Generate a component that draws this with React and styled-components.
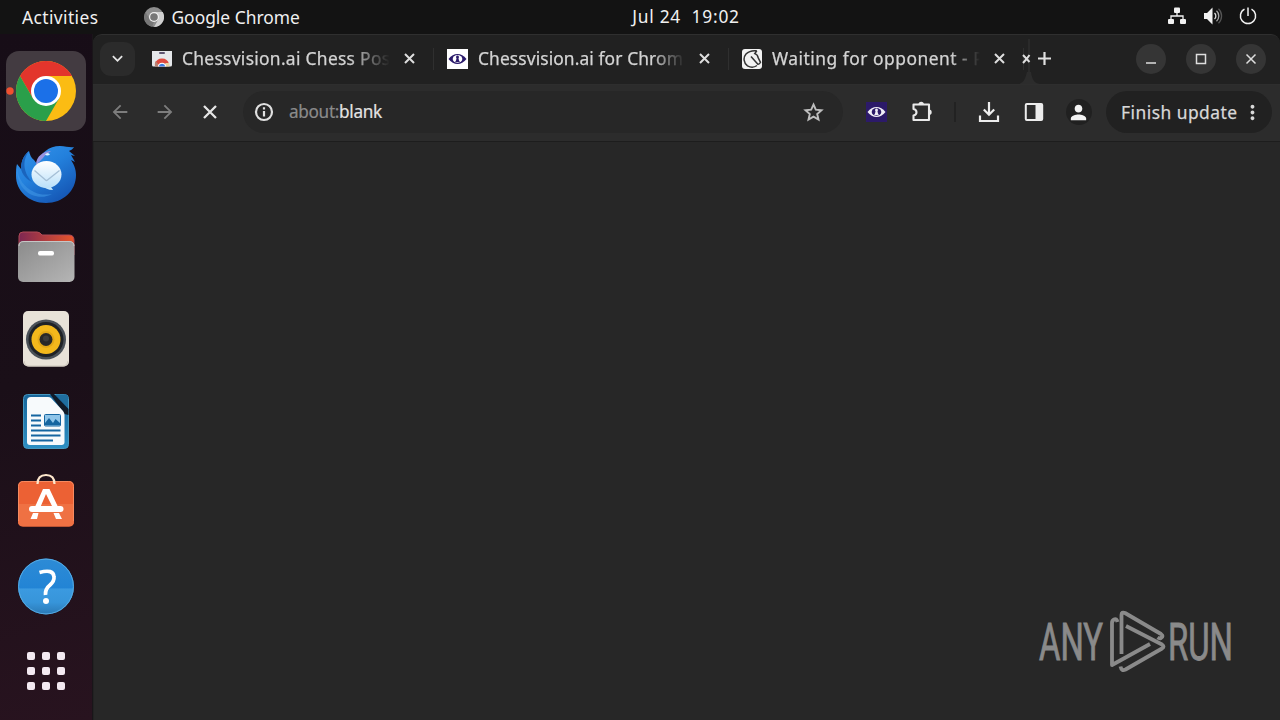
import React from 'react';
import styled, { createGlobalStyle } from 'styled-components';
import {
  MdArrowBack,
  MdArrowForward,
  MdKeyboardArrowDown,
  MdMoreVert,
  MdPerson,
} from 'react-icons/md';

const GlobalStyle = createGlobalStyle`
  * {
    box-sizing: border-box;
  }

  body {
    margin: 0;
    overflow: hidden;
    background: #131313;
    font-family: "Noto Sans", "Open Sans", sans-serif;
  }

  svg {
    display: block;
    flex-shrink: 0;
  }
`;

const Desktop = styled.div`
  display: grid;
  grid-template: 34px 686px / 93px 1187px;
  width: 1280px;
  height: 720px;
  overflow: hidden;
`;

const TopBar = styled.header`
  grid-column: 1 / 3;
  display: grid;
  grid-template-columns: 500px 372px 1fr;
  align-items: center;
  background: #131313;
  color: #f0f0f0;
`;

const TopGroup = styled.div`
  display: flex;
  align-items: center;
  justify-content: ${(props) => props.$justify || 'flex-start'};
  padding: ${(props) => props.$padding || '0'};
  gap: ${(props) => props.$gap || '0'};
  height: 34px;
`;

const TopLabel = styled.span`
  font-size: 17.4px;
  line-height: 24px;
  letter-spacing: ${(props) => props.$spacing || '0'};
  white-space: pre;
`;

const DockBar = styled.nav`
  display: flex;
  flex-direction: column;
  gap: 3px;
  padding: 17px 7px 0 6px;
  background: linear-gradient(165deg, #170d17 0%, #1a0f18 50%, #28131f 100%);
  border-right: 1px solid #191519;
`;

const DockTile = styled.div`
  width: 80px;
  height: 80px;
  flex-shrink: 0;
  border-radius: 13px;
  background: ${(props) => (props.$active ? '#433b41' : 'transparent')};
`;

const Browser = styled.main`
  display: grid;
  grid-template: 50px 58px 1fr / 1187px;
  background: #131313;
`;

const TabStrip = styled.div`
  display: flex;
  align-items: center;
  padding-bottom: 2px;
  background: #212121;
  border-top: 1px solid #2f2f2f;
  border-radius: 9px 9px 0 0;
`;

const TabSearch = styled.button`
  display: flex;
  align-items: center;
  justify-content: center;
  width: 35px;
  height: 34px;
  flex-shrink: 0;
  margin: 0 4px 0 7px;
  padding: 0;
  border: 0;
  border-radius: 11px;
  background: #2b2b2b;
  color: #e6e6e6;
`;

const Tab = styled.div`
  display: flex;
  align-items: center;
  width: 295px;
  height: 22px;
  flex-shrink: 0;
  padding: 0 18px 0 13px;
  border-right: 1px solid #2f2f2f;
  color: #d4d4d4;
`;

const TabTitle = styled.span`
  width: 208px;
  margin: 0 14px 2px 10px;
  font-size: 17.4px;
  line-height: 24px;
  letter-spacing: ${(props) => props.$spacing};
  white-space: nowrap;
  -webkit-text-stroke: 0.25px currentColor;
  mask-image: linear-gradient(90deg, #000 ${(props) => props.$fadeFrom}, transparent 100%);
`;

const SqueezedTab = styled.div`
  align-self: flex-start;
  width: 13px;
  flex-shrink: 0;
  margin-left: -4px;
`;

const NewTab = styled.div`
  display: flex;
  width: 22px;
  flex-shrink: 0;
  margin: 0 76px 0 5px;
  color: #e0e0e0;
`;

const WindowButton = styled.button`
  display: flex;
  align-items: center;
  justify-content: center;
  width: 30px;
  height: 30px;
  flex-shrink: 0;
  margin-right: 20px;
  padding: 0;
  border: 0;
  border-radius: 50%;
  background: #353535;

  &:last-child {
    margin-right: 0;
  }
`;

const Toolbar = styled.div`
  display: flex;
  align-items: center;
  padding: 0 0 2px 4.5px;
  background: #2c2c2c;
  border-top: 1px solid #2e2e2e;
  border-bottom: 1px solid #1d1d1d;
`;

const ToolSlot = styled.div`
  display: flex;
  align-items: center;
  justify-content: center;
  width: ${(props) => props.$width || '45px'};
  color: ${(props) => props.$color || '#e6e6e6'};
`;

const AddressBar = styled.div`
  display: flex;
  align-items: center;
  width: 600px;
  height: 42px;
  margin: 0 10.5px;
  padding: 0 18px 0 10px;
  border-radius: 21px;
  background: #272727;
  color: #d9d9d9;
`;

const Address = styled.span`
  flex: 1;
  margin-left: 14px;
  font-size: 17.2px;
  line-height: 24px;
  letter-spacing: -0.33px;
  color: #e3e3e3;
  -webkit-text-stroke: 0.2px currentColor;
`;

const Scheme = styled.span`
  color: #8b8b8b;
`;

const Avatar = styled.div`
  display: flex;
  align-items: center;
  justify-content: center;
  width: 26px;
  height: 26px;
  border-radius: 50%;
  background: #202020;
  color: #f2f2f2;
`;

const UpdateButton = styled.button`
  display: flex;
  align-items: center;
  justify-content: space-between;
  width: 166px;
  height: 42px;
  flex-shrink: 0;
  margin-left: 5.5px;
  padding: 0 8px 0 15px;
  border: 0;
  border-radius: 21px;
  background: #212121;
  color: #d8d8d8;
  font-family: inherit;
  font-size: 17.4px;
  letter-spacing: 0.48px;
  white-space: nowrap;
  -webkit-text-stroke: 0.25px currentColor;
`;

const Page = styled.section`
  display: flex;
  align-items: flex-end;
  justify-content: flex-end;
  padding: 0 46px 46px 0;
  background: #272727;
  border-left: 1px solid #222;
`;

const ChromeMono = () => (
  <svg width="20" height="20" viewBox="0 0 20 20">
    <circle cx="10" cy="10" r="10" fill="#8d8d8d" />
    <path d="M10 5h8.7A10 10 0 0 1 10 20l4.3-7.5z" fill="#d0d0d0" />
    <path d="M1.5 5l4.2 7.5A5 5 0 0 0 10 15l-2 4.8A10 10 0 0 1 1.5 5z" fill="#777" />
    <circle cx="10" cy="10" r="5" fill="#eee" />
    <circle cx="10" cy="10" r="3.8" fill="#777" />
  </svg>
);

const NetworkIcon = () => (
  <svg width="20" height="18" viewBox="0 0 20 18" fill="#f2f2f2">
    <rect x="7" y="0.5" width="6" height="5.5" rx="1" />
    <rect x="1" y="12" width="6" height="5" rx="1" />
    <rect x="13" y="12" width="6" height="5" rx="1" />
    <path d="M10 5v4M4 12.500V9h12v3.500" fill="none" stroke="#f2f2f2" strokeWidth="1.300" />
  </svg>
);

const VolumeIcon = () => (
  <svg width="20" height="20" viewBox="0 0 20 20">
    <path d="M1 7h3l5.500-5.500v17L4 13H1z" fill="#f2f2f2" />
    <path d="M11.500 7a4 4 0 0 1 0 6" fill="none" stroke="#e0e0e0" strokeWidth="1.300" />
    <path d="M13.500 4.800a7 7 0 0 1 0 10.400" fill="none" stroke="#aaa" strokeWidth="1.300" />
    <path d="M15.500 2.800a10 10 0 0 1 0 14.400" fill="none" stroke="#555" strokeWidth="1.300" />
  </svg>
);

const PowerIcon = () => (
  <svg width="18" height="18" viewBox="0 0 18 18" fill="none" stroke="#f2f2f2" strokeWidth="1.500">
    <path d="M5.500 2.200a7.600 7.600 0 1 0 7 0M9 .5v8.500" />
  </svg>
);

const ChromeIcon = () => (
  <svg width="80" height="80" viewBox="0 0 80 80">
    <circle cx="4" cy="40" r="3.700" fill="#f1502f" />
    <circle cx="40" cy="40" r="30" fill="#fbbc13" />
    <path d="M40 25h26A30 30 0 0 0 14 25l13 22.500z" fill="#e3352c" />
    <path d="M14 25A30 30 0 0 0 40 70l13-22.500H27z" fill="#2a9f4a" />
    <circle cx="40" cy="40" r="15" fill="#fff" />
    <circle cx="40" cy="40" r="12" fill="#1b70e8" />
  </svg>
);

const MailBirdIcon = () => (
  <svg width="80" height="80" viewBox="0 0 80 80">
    <defs>
      <linearGradient id="bird" x1="0" y1="0" x2="0.7" y2="1">
        <stop offset="0" stopColor="#3595ec" />
        <stop offset="0.5" stopColor="#2380dc" />
        <stop offset="1" stopColor="#1556b4" />
      </linearGradient>
      <linearGradient id="letter" x1="0" y1="0" x2="0" y2="1">
        <stop offset="0" stopColor="#fff" />
        <stop offset="1" stopColor="#b9e0fa" />
      </linearGradient>
    </defs>
    <path d="M11 30l4 5c0-8 3-14 8-18 1 4 2 7 5 9l3 4c3-11 12-18 23-18 6 0 10 2 14 1-1 2-3 3-5 4l6 5-4-1 4 7-4-2c4 6 5 11 5 15 0 16-13 28-30 28-18 0-30-13-30-27 0-5 0-9 1-12z" fill="url(#bird)" />
    <path d="M23 17c-6 8-7 20 3 31-6-3-10-8-11-13 0-8 3-14 8-18z" fill="#1a64bd" />
    <path d="M11 33c1 12 7 20 17 25 6 3 11 3 18 2-14 8-36-1-35-27z" fill="#3f96e4" opacity="0.600" />
    <path d="M30 31c0-9 8-14 15-14-4 3-6 4-8 7-2 2-4 4-7 7z" fill="#9792df" />
    <path d="M34 50c4 4 8 6 13 6-1-2-2-3-3-4z" fill="#c5e7fb" />
    <ellipse cx="40.500" cy="40.500" rx="15" ry="13.500" fill="url(#letter)" />
    <path d="M28.500 36.500l11 9.500q1 1 2 0l12-9.500" fill="none" stroke="#a5bfd6" strokeWidth="1.300" />
    <path d="M39 20.500q3-3 5 0-3 2-5 0z" fill="#d7f3ff" />
  </svg>
);

const FilesIcon = () => (
  <svg width="80" height="80" viewBox="0 0 80 80">
    <defs>
      <linearGradient id="folderBack">
        <stop offset="0" stopColor="#7d2752" />
        <stop offset="1" stopColor="#e8562c" />
      </linearGradient>
      <linearGradient id="folderFront" x1="0" y1="0" x2="1" y2="1">
        <stop offset="0" stopColor="#8b8b8b" />
        <stop offset="1" stopColor="#b5b5b5" />
      </linearGradient>
    </defs>
    <path d="M13 36V19q0-4 4-4h14q3 0 5 3h27q5 0 5 5v15z" fill="url(#folderBack)" stroke="#b04a56" />
    <rect x="12" y="24" width="56.500" height="41" rx="5" fill="url(#folderFront)" />
    <path d="M13 29q0-4.500 5-4.500h45q5 0 5 4.500" fill="none" stroke="#c6c6c6" />
    <rect x="32" y="34" width="16" height="4.500" rx="2" fill="#fff" />
  </svg>
);

const SpeakerIcon = () => (
  <svg width="80" height="80" viewBox="0 0 80 80">
    <rect x="17" y="11" width="46" height="55.500" rx="5" fill="#e8e2d8" />
    <path d="M18 61q1 5 5 5h34q4 0 5-5" fill="none" stroke="#cfc8bc" />
    <circle cx="40" cy="39.500" r="20" fill="#4a5057" />
    <circle cx="40" cy="39.500" r="17.500" fill="#1f2226" />
    <circle cx="40" cy="39.500" r="14.500" fill="#f3b81c" />
    <circle cx="40" cy="39.500" r="8.500" fill="#e2a817" />
    <circle cx="40" cy="39.500" r="6.500" fill="#282828" />
    <circle cx="40" cy="38.500" r="3" fill="#3c3c3c" />
  </svg>
);

const WriterIcon = () => (
  <svg width="80" height="80" viewBox="0 0 80 80">
    <defs>
      <linearGradient id="writer" x1="0" y1="0" x2="0" y2="1">
        <stop offset="0" stopColor="#17659a" />
        <stop offset="1" stopColor="#2c8fc3" />
      </linearGradient>
    </defs>
    <rect x="17.500" y="11.500" width="45" height="54" rx="4" fill="url(#writer)" stroke="#4596bd" />
    <path d="M50 11.500h9q3 0 3 3v11z" fill="#1f6e9f" />
    <path d="M44 11h4l14.500 15v6l-4-1z" fill="#101b29" />
    <path d="M21 18q0-4 4-4h17q2 0 3 1l12 13q1.500 2 1.500 4v27q0 3-3 3H24q-3 0-3-3z" fill="#f7fafc" />
    <path d="M25 32.500h10M25 37.500h10M25 42.500h10M25 47.500h29.500M25 52.500h29.500M25 57.500h22" stroke="#1565a0" strokeWidth="2" />
    <rect x="38.500" y="31.500" width="16" height="11.500" rx="1" fill="#8fc5e9" stroke="#1565a0" />
    <path d="M39 42v-2l4-5 4 5 2.500-4 4.500 4v2z" fill="#1565a0" />
  </svg>
);

const StoreIcon = () => (
  <svg width="80" height="80" viewBox="0 0 80 80">
    <rect x="12" y="15" width="56" height="45.500" rx="5" fill="#ec6134" />
    <path d="M12 38h56v17.500q0 5-5 5H17q-5 0-5-5z" fill="#ef7143" />
    <path d="M12.500 55V20.500q0-5 5-5h45q5 0 5 5V55" fill="none" stroke="#f68a60" />
    <path d="M31.500 18q0-9 8.500-9t8.500 9" fill="none" stroke="#fde7cc" strokeWidth="2.200" />
    <g fill="#fff">
      <path d="M37 23h6.500l9 19H47L40 28l-6 14h-5.500z" />
      <rect x="23" y="40" width="34.500" height="6" rx="3" />
      <path d="M27 47h5.500L31 53h-6.500zM47.500 47h5.500l3 6h-6z" />
    </g>
  </svg>
);

const HelpIcon = () => (
  <svg width="80" height="80" viewBox="0 0 80 80">
    <defs>
      <linearGradient id="help" x1="0" y1="0" x2="0" y2="1">
        <stop offset="0" stopColor="#2d8bd6" />
        <stop offset="0.53" stopColor="#2284d5" />
        <stop offset="0.54" stopColor="#3b9ae0" />
        <stop offset="0.78" stopColor="#3795da" />
        <stop offset="1" stopColor="#2a78b4" />
      </linearGradient>
    </defs>
    <circle cx="40" cy="37.500" r="28" fill="url(#help)" />
    <circle cx="40" cy="37.500" r="27.400" fill="none" stroke="#55aae2" />
    <path d="M33.500 23.500q14-4 14.500 4.500 .5 4-4 8-5 4-4.500 10" fill="none" stroke="#fff" strokeWidth="3.700" />
    <circle cx="40" cy="52" r="3" fill="#fff" />
  </svg>
);

const AppsIcon = () => (
  <svg width="80" height="80" viewBox="0 0 80 80" fill="#f3e9f1">
    {[20, 35, 50].map((y) =>
      [21, 36, 51].map((x) => <rect key={`${x}-${y}`} x={x} y={y} width="8" height="8" rx="2" />)
    )}
  </svg>
);

const StoreFavicon = () => (
  <svg width="20" height="20" viewBox="0 0 20 20">
    <path d="M0 2h20v14q0 1.500-1.500 1.500h-17Q0 17.500 0 16z" fill="#e5e7ea" />
    <rect x="7" y="3" width="6" height="2" rx="1" fill="#5e5571" />
    <path d="M3 15a7.200 7.200 0 0 1 14 0l-3 2.500H6z" fill="#df4a3f" />
    <path d="M2.800 15q.2-2 1-3l4 5.500H3z" fill="#b98172" />
    <path d="M13.500 14h3.700q.5 2 .3 3.500h-5z" fill="#ead2a0" />
    <path d="M5.800 17.500a4.300 4.300 0 0 1 8.500 0z" fill="#fff" />
    <path d="M6.600 17.500a3.500 3.500 0 0 1 6.800 0z" fill="#3a7be0" />
  </svg>
);

const EyeIcon = ({ background, color }) => (
  <svg width="21" height="20" viewBox="0 0 21 20">
    <rect width="21" height="20" fill={background} />
    <path d="M1.500 10q4-5 9-5t9 5q-4 5-9 5t-9-5z" fill={color} />
    <ellipse cx="10.500" cy="10" rx="4.800" ry="3.900" fill={background} />
    <path d="M10.500 6.500a1.600 1.600 0 0 1 1 2.700l.5 2.300 1 1.800H8l1-1.800.5-2.300a1.600 1.600 0 0 1 1-2.700z" fill={color} />
  </svg>
);

const KnightFavicon = () => (
  <svg width="20" height="20" viewBox="0 0 20 20">
    <rect width="20" height="20" rx="3" fill="#f2f2f2" />
    <path d="M14.800 1.800Q8 1 4 5C1 8.500 1.500 14 5.500 16.800q5 2.900 9.500-.3M14.800 1.800l-2 2.800q3 1 3.400 4.200l2.300 4.500q-1 2.200-2.600 2L9 7.500" fill="none" stroke="#333" strokeWidth="1.500" />
  </svg>
);

const StopIcon = () => (
  <svg width="14" height="14" viewBox="0 0 14 14" stroke="currentColor" strokeWidth="2.300">
    <path d="M1 1l12 12M13 1L1 13" />
  </svg>
);

const InfoIcon = () => (
  <svg width="22" height="22" viewBox="0 0 22 22">
    <circle cx="11" cy="11" r="8" fill="none" stroke="#e0e0e0" strokeWidth="2.200" />
    <path d="M11 10v5.500M11 6.300v2.200" stroke="#e0e0e0" strokeWidth="2.200" />
  </svg>
);

const StarIcon = () => (
  <svg width="23" height="22" viewBox="0 0 23 22" fill="none" stroke="#bdbdbd" strokeWidth="1.900">
    <path d="M11.500 3.500l2.300 5.200 5.700.5-4.300 3.800 1.300 5.600-5-3-5 3 1.300-5.600L3.500 9.200l5.700-.5z" />
  </svg>
);

const PuzzleIcon = () => (
  <svg width="23" height="22" viewBox="0 0 23 22">
    <path d="M3.500 3.500H19V19H3.500v-4.500q3-.5 3-3.200t-3-3.300z" fill="none" stroke="#e9e9e9" strokeWidth="2.100" strokeLinejoin="round" />
    <path d="M8.500 3.500a2.700 2.700 0 0 1 5.400 0zM19 8.500a2.700 2.700 0 0 1 0 5.400z" fill="#e9e9e9" />
  </svg>
);

const DownloadIcon = () => (
  <svg width="22" height="22" viewBox="0 0 22 22" fill="none" stroke="#ededed" strokeWidth="2.200">
    <path d="M11 1v12M5.800 8.500L11 13.700l5.200-5.200M2 14.500V20h18v-5.500" />
  </svg>
);

const PanelIcon = () => (
  <svg width="20" height="20" viewBox="0 0 20 20">
    <rect x="1.800" y="2" width="16.400" height="16" rx="1" fill="none" stroke="#ededed" strokeWidth="2" />
    <path d="M11.500 2H18v16h-6.500z" fill="#ededed" />
  </svg>
);

const CloseCross = () => (
  <svg width="11" height="11" viewBox="0 0 11 11" stroke="#dedede" strokeWidth="2">
    <path d="M1 1l9 9M10 1l-9 9" />
  </svg>
);

// squeezed tab: clipped cross, divider line and the flare that joins the toolbar
const TabFlare = () => (
  <svg width="20" height="49" viewBox="0 0 20 49">
    <path d="M9 4v35" stroke="#2a2a2a" strokeWidth="2" />
    <path d="M-4 49c8 0 9-5 11-12h4c1 7 3 12 10 12z" fill="#2c2c2c" />
    <path d="M3 20l6.500 7M3 28l3.500-4 3-4" stroke="#dedede" strokeWidth="2" fill="none" />
  </svg>
);

const PlusIcon = () => (
  <svg width="13" height="13" viewBox="0 0 13 13" stroke="currentColor" strokeWidth="2.200">
    <path d="M6.500 0v13M0 6.500h13" />
  </svg>
);

const windowGlyphs = ['M2 11h10', 'M2.500 2.500h9v9h-9z', 'M2.500 2.500l9 9M11.500 2.500l-9 9'];

const Watermark = () => (
  <svg width="198" height="66" viewBox="0 0 198 66">
    <g fill="#8a8a8a" stroke="#8a8a8a" strokeWidth="0.9" fontFamily="Roboto, sans-serif" fontSize="51" fontWeight="400">
      <text x="3" y="52" textLength="64" lengthAdjust="spacingAndGlyphs">ANY</text>
      <text x="132" y="52" textLength="65" lengthAdjust="spacingAndGlyphs">RUN</text>
    </g>
    <g fill="none" stroke="#8a8a8a" strokeWidth="3.800" strokeLinejoin="round">
      <path d="M81.500 14q-1-4-3.500-2.500-2 1-2 3.500v42l38-21" />
      <path d="M85.500 46V7q0-3.500 3.500-2l36 21q3 2 0 4-1.500.8-3.500-.5" />
      <path d="M90 18l36 18.500q3 2 0 4L89.500 61.500q-4 2-5-3" />
    </g>
  </svg>
);

const dockIcons = [
  ChromeIcon,
  MailBirdIcon,
  FilesIcon,
  SpeakerIcon,
  WriterIcon,
  StoreIcon,
  HelpIcon,
  AppsIcon,
];

const tabs = [
  { title: 'Chessvision.ai Chess Pos', icon: <StoreFavicon />, spacing: '0.3px', fadeFrom: '80%' },
  { title: 'Chessvision.ai for Chrom', icon: <EyeIcon background="#fff" color="#2b1a6b" />, spacing: '0.1px', fadeFrom: '84%' },
  { title: 'Waiting for opponent - P', icon: <KnightFavicon />, spacing: '0.5px', fadeFrom: '86%' },
];

const App = () => {
  return (
    <Desktop>
      <GlobalStyle />
      <TopBar>
        <TopGroup $padding="0 0 0 22px">
          <TopLabel $spacing="0.4px">Activities</TopLabel>
          <TopGroup $padding="0 0 0 46px" $gap="7px">
            <ChromeMono />
            <TopLabel>Google Chrome</TopLabel>
          </TopGroup>
        </TopGroup>
        <TopGroup $justify="center" $padding="0 0 2px">
          <TopLabel $spacing="0.75px">Jul 24  19:02</TopLabel>
        </TopGroup>
        <TopGroup $justify="flex-end" $gap="16px" $padding="0 23px 2px 0">
          <NetworkIcon />
          <VolumeIcon />
          <PowerIcon />
        </TopGroup>
      </TopBar>

      <DockBar>
        {dockIcons.map((Icon, index) => (
          <DockTile key={index} $active={index === 0}>
            <Icon />
          </DockTile>
        ))}
      </DockBar>

      <Browser>
        <TabStrip>
          <TabSearch>
            <MdKeyboardArrowDown size={21} />
          </TabSearch>
          {tabs.map((tab) => (
            <Tab key={tab.title}>
              {tab.icon}
              <TabTitle $spacing={tab.spacing} $fadeFrom={tab.fadeFrom}>{tab.title}</TabTitle>
              <CloseCross />
            </Tab>
          ))}
          <SqueezedTab>
            <TabFlare />
          </SqueezedTab>
          <NewTab>
            <PlusIcon />
          </NewTab>
          {windowGlyphs.map((glyph) => (
            <WindowButton key={glyph}>
              <svg width="14" height="14" viewBox="0 0 14 14" fill="none" stroke="#dedede" strokeWidth="1.500">
                <path d={glyph} />
              </svg>
            </WindowButton>
          ))}
        </TabStrip>

        <Toolbar>
          <ToolSlot $color="#7d7d7d"><MdArrowBack size={22} /></ToolSlot>
          <ToolSlot $color="#7d7d7d"><MdArrowForward size={22} /></ToolSlot>
          <ToolSlot><StopIcon /></ToolSlot>
          <AddressBar>
            <InfoIcon />
            <Address><Scheme>about:</Scheme>blank</Address>
            <StarIcon />
          </AddressBar>
          <ToolSlot><EyeIcon background="#2c1a69" color="#f0eef7" /></ToolSlot>
          <ToolSlot><PuzzleIcon /></ToolSlot>
          <ToolSlot $width="23px">
            <svg width="2" height="20"><rect width="2" height="20" fill="#222" /></svg>
          </ToolSlot>
          <ToolSlot><DownloadIcon /></ToolSlot>
          <ToolSlot><PanelIcon /></ToolSlot>
          <ToolSlot $width="44px">
            <Avatar><MdPerson size={23} /></Avatar>
          </ToolSlot>
          <UpdateButton>
            Finish update
            <MdMoreVert size={23} />
          </UpdateButton>
        </Toolbar>

        <Page>
          <Watermark />
        </Page>
      </Browser>
    </Desktop>
  );
};

export default App;
